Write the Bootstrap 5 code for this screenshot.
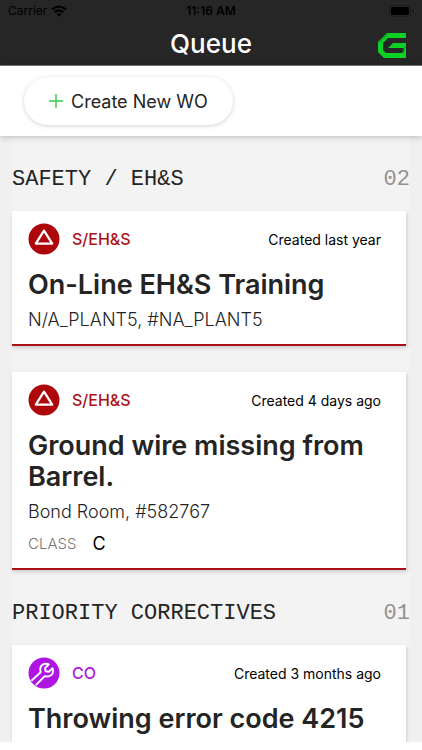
<!DOCTYPE html>
<html lang="en">
<head>
<meta charset="utf-8">
<meta name="viewport" content="width=device-width, initial-scale=1">
<title>Queue</title>
<link rel="stylesheet" href="https://cdn.jsdelivr.net/npm/bootstrap@5.3.0/dist/css/bootstrap.min.css">
<style>
body { font-family: Inter, "Liberation Sans", sans-serif; color: #242424; }
.app-top { background: #262626; border-bottom: 1px solid #77777a; }
.status-bar { height: 22px; padding: 0 8px; font-size: 12px; line-height: 22px; color: #000; }
.status-bar > * { flex: 1 1 0; }
.title-bar { height: 43px; padding: 0 16px; }
.title-bar > * { flex: 1 1 0; }
.page-title { font-size: 26px; line-height: 43px; font-weight: 500; }
.toolbar { padding: 11px 24px; box-shadow: 0 1px 6px rgba(0,0,0,.24); z-index: 1; }
.btn-create { height: 48px; padding: 0 25px; font-size: 18px; color: #242424; background: #fff; box-shadow: 0 1px 4px rgba(0,0,0,.18); }
.queue { background: #f0f0f0; padding: 0 12px; min-height: 0; }
.queue-list { background: #f3f3f3; }
.group-head { height: 75px; padding-top: 12px; font-family: "Liberation Mono", monospace; }
.group-head > * { font-size: 22px; font-weight: 400; line-height: 24px; }
.group-count { color: #929292; }
.order { border: 0; border-bottom: 2px solid #a91217; border-radius: 0; margin-right: 4px; padding: 12px 16px; box-shadow: 1px 2px 4px rgba(0,0,0,.16); }
.order + .order { margin-top: 26px; }
.order-corrective { border-color: #ac19df; }
.order-kind { font-size: 16px; font-weight: 500; color: #a91217; }
.order-corrective .order-kind { color: #ac19df; }
.order-age { font-size: 14px; color: #000; padding-right: 9px; }
.order-title { font-size: 27px; line-height: 31px; font-weight: 600; margin: 14px 0 8px; }
.order-place { font-size: 18px; line-height: 24px; font-weight: 300; }
.class-label { font-size: 15px; line-height: 24px; font-weight: 300; color: #777; }
.class-value { font-size: 18px; line-height: 24px; color: #000; }
.bottom-edge { height: 8px; }
</style>
<script src="https://cdn.jsdelivr.net/npm/bootstrap@5.3.0/dist/js/bootstrap.bundle.min.js"></script>
</head>
<body class="vh-100 d-flex flex-column overflow-hidden bg-white">
<header class="app-top flex-shrink-0">
  <div class="status-bar d-flex align-items-center">
    <div class="d-flex align-items-center gap-1"><span>Carrier</span>
      <svg width="16" height="12" viewBox="0 0 16 12" aria-hidden="true"><g fill="none" stroke="#000" stroke-width="2"><path d="M1 4.6Q8-1.6 15 4.6"/><path d="M3.6 7.3Q8 3.4 12.4 7.3"/></g><path d="M5.6 9.2Q8 7.2 10.4 9.2L8 11.8Z"/></svg>
    </div>
    <div class="text-center fw-semibold text-nowrap">11:16 AM</div>
    <div class="d-flex justify-content-end">
      <svg width="25" height="12" viewBox="0 0 25 12" aria-hidden="true"><rect x=".5" y=".5" width="21" height="11" rx="3" fill="none" stroke="#1b1b1b"/><rect x="2" y="2" width="18" height="8" rx="1.6"/><path d="M23 4v4q1.4-.6 1.4-2T23 4Z" fill="#171717"/></svg>
    </div>
  </div>
  <div class="title-bar d-flex align-items-center">
    <span></span>
    <h1 class="page-title text-white text-center m-0">Queue</h1>
    <div class="d-flex justify-content-end pt-1">
      <svg width="28" height="25" viewBox="0 0 28 25" role="img" aria-label="Home"><path fill="#0bd224" d="M9 0H28V5H10L5 10V17L8 20H24L26 18V15H10L15 10H28V25H6L0 19V9Z"/><path d="M10 1 1 10M28 14l-3 2v4" fill="none" stroke="#177b24" stroke-width=".7"/></svg>
    </div>
  </div>
</header>
<div class="toolbar bg-white flex-shrink-0 position-relative">
  <button type="button" class="btn-create btn rounded-pill border-0 d-inline-flex align-items-center gap-2">
    <svg width="14" height="14" viewBox="0 0 14 14" aria-hidden="true"><path d="M7 0V14M0 7H14" stroke="#36cb49" stroke-width="1.4"/></svg>
    Create New WO
  </button>
</div>
<main class="queue flex-grow-1 overflow-hidden">
  <div class="queue-list">
    <section>
      <div class="group-head d-flex justify-content-between align-items-center"><h2 class="m-0">SAFETY / EH&amp;S</h2><span class="group-count">02</span></div>
      <article class="order card">
        <div class="d-flex align-items-center">
          <svg class="me-2" width="32" height="32" viewBox="0 0 32 32" aria-hidden="true"><circle cx="16" cy="16" r="15.5" fill="#ad060b"/><path d="M16 7.6 24.2 20.6H7.8Z" fill="none" stroke="#fff" stroke-width="2.3" stroke-linejoin="round"/></svg>
          <span class="order-kind ps-1">S/EH&amp;S</span><span class="order-age ms-auto">Created last year</span>
        </div>
        <h3 class="order-title">On-Line EH&amp;S Training</h3>
        <div class="order-place">N/A_PLANT5, #NA_PLANT5</div>
      </article>
      <article class="order card">
        <div class="d-flex align-items-center">
          <svg class="me-2" width="32" height="32" viewBox="0 0 32 32" aria-hidden="true"><circle cx="16" cy="16" r="15.5" fill="#ad060b"/><path d="M16 7.6 24.2 20.6H7.8Z" fill="none" stroke="#fff" stroke-width="2.3" stroke-linejoin="round"/></svg>
          <span class="order-kind ps-1">S/EH&amp;S</span><span class="order-age ms-auto">Created 4 days ago</span>
        </div>
        <h3 class="order-title">Ground wire missing from Barrel.</h3>
        <div class="order-place">Bond Room, #582767</div>
        <div class="d-flex align-items-center gap-3 mt-2"><span class="class-label">CLASS</span><span class="class-value">C</span></div>
      </article>
    </section>
    <section>
      <div class="group-head d-flex justify-content-between align-items-center"><h2 class="m-0">PRIORITY CORRECTIVES</h2><span class="group-count">01</span></div>
      <article class="order order-corrective card">
        <div class="d-flex align-items-center">
          <svg class="me-2" width="32" height="32" viewBox="0 0 32 32" aria-hidden="true"><circle cx="16" cy="16" r="15.5" fill="#ae15e2"/><path d="M3.400 23.800 12.700 15.200Q11.200 10.500 14.200 8Q17.200 5.800 20.800 7.400L17 11.200 17.700 14.200 20.800 14.800 24.600 11.200Q26 15.500 23.300 18Q20.500 20.300 16.800 19.200L7.800 28.200" fill="none" stroke="#fff" stroke-width="1.900" stroke-linejoin="round"/></svg>
          <span class="order-kind ps-1">CO</span><span class="order-age ms-auto">Created 3 months ago</span>
        </div>
        <h3 class="order-title">Throwing error code 4215</h3>
      </article>
    </section>
  </div>
</main>
<div class="bottom-edge bg-white flex-shrink-0"></div>
</body>
</html>
